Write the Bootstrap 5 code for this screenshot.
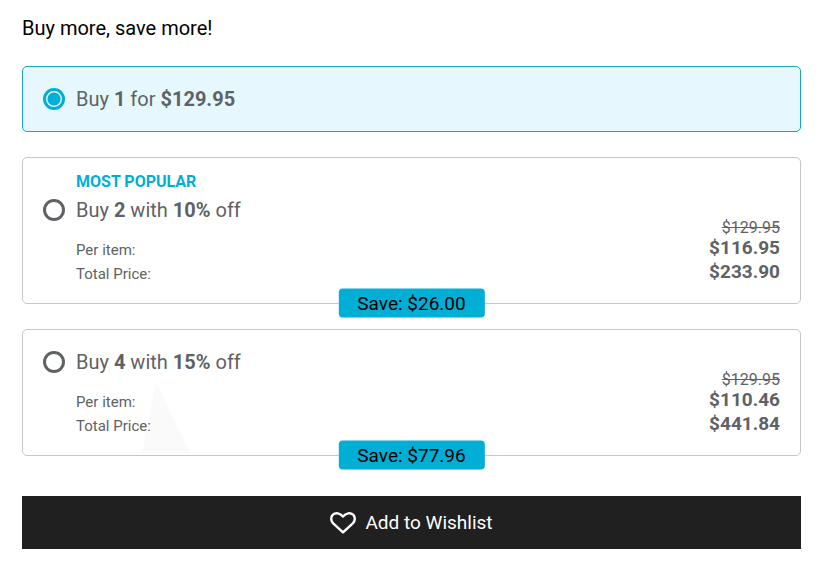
<!DOCTYPE html>
<html lang="en">
<head>
<meta charset="utf-8">
<meta name="viewport" content="width=device-width, initial-scale=1">
<title>Buy more, save more!</title>
<link href="https://cdn.jsdelivr.net/npm/bootstrap@5.3.0/dist/css/bootstrap.min.css" rel="stylesheet">
<script src="https://cdn.jsdelivr.net/npm/bootstrap@5.3.0/dist/js/bootstrap.bundle.min.js" defer></script>
<style>
  :root { --brand: #00aed6; --ink: #5f6265; }
  body { font-family: Roboto, "Open Sans", sans-serif; color: #000; background: #fff; }
  .offers { padding: 16px 18px 20px 22px; }
  .offers-title { font-size: 20px; line-height: 24px; font-weight: 400; margin-bottom: 26px; }
  .offer { color: var(--ink); border: 1px solid #c3c8ca; border-radius: 5px; padding: 21px 20px 17px; margin-bottom: 25px; }
  .offer-single { padding-bottom: 21px; }
  .offer-popular { padding-top: 12px; }
  .offer-selected { background: #e6f8fe; border-color: #14a9be; }
  .offer-choice { gap: 11px; font-size: 20px; line-height: 22px; }
  .offer-choice .form-check-input { width: 22px; height: 22px; border: 3px solid var(--ink); background-color: transparent; }
  .offer-choice .form-check-input:checked { border-color: var(--brand); background: #e6f8fe radial-gradient(circle, var(--brand) 6px, transparent 7px); }
  .offer-flag { color: var(--brand); font-size: 16px; line-height: 24px; margin-bottom: 5px; }
  .indent { padding-left: 33px; }
  .offer-prices { color: var(--ink); line-height: 24px; }
  .offer-prices th { font-size: 15px; font-weight: 400; }
  .offer-prices td { font-size: 19px; line-height: 20px; font-weight: 700; text-align: right; vertical-align: top; }
  .offer-prices .was { height: 17px; font-size: 16px; line-height: 14px; font-weight: 400; }
  .offer-save { background: var(--brand); color: #000; border-radius: 4px; font-size: 19px; line-height: 29px; padding: 0 19px; }
  .peak { left: 119px; bottom: 2px; width: 48px; height: 72px; }
  .wish { background: #202020; color: #fff; font-size: 19px; line-height: 25px; padding: 14px; gap: 9px; border: 0; margin-top: 40px; }
  .wish:hover { background: #333; color: #fff; }
</style>
</head>
<body>
<main class="offers container-fluid">
  <form>
    <h1 class="offers-title">Buy more, save more!</h1>

    <section class="offer offer-single offer-selected">
      <div class="offer-choice d-flex align-items-center">
        <input class="form-check-input m-0 flex-shrink-0" type="radio" name="offer" id="offer1" checked>
        <label for="offer1">Buy <b>1</b> for <b>$129.95</b></label>
      </div>
    </section>

    <section class="offer offer-popular position-relative">
      <p class="offer-flag indent fw-bold">MOST POPULAR</p>
      <div class="offer-choice d-flex align-items-center">
        <input class="form-check-input m-0 flex-shrink-0" type="radio" name="offer" id="offer2">
        <label for="offer2">Buy <b>2</b> with <b>10%</b> off</label>
      </div>
      <div class="indent">
        <table class="offer-prices w-100">
          <tbody>
            <tr><td class="was p-0" colspan="2"><s>$129.95</s></td></tr>
            <tr><th class="p-0" scope="row">Per item:</th><td class="p-0">$116.95</td></tr>
            <tr><th class="p-0" scope="row">Total Price:</th><td class="p-0">$233.90</td></tr>
          </tbody>
        </table>
      </div>
      <div class="offer-save position-absolute top-100 start-50 translate-middle text-nowrap">Save: $26.00</div>
    </section>

    <section class="offer position-relative mb-0">
      <svg class="peak position-absolute" viewBox="0 0 48 72" aria-hidden="true"><path d="M14 0 48 72H0Z" fill="#fafafa"/></svg>
      <div class="offer-choice d-flex align-items-center position-relative">
        <input class="form-check-input m-0 flex-shrink-0" type="radio" name="offer" id="offer4">
        <label for="offer4">Buy <b>4</b> with <b>15%</b> off</label>
      </div>
      <div class="indent position-relative">
        <table class="offer-prices w-100">
          <tbody>
            <tr><td class="was p-0" colspan="2"><s>$129.95</s></td></tr>
            <tr><th class="p-0" scope="row">Per item:</th><td class="p-0">$110.46</td></tr>
            <tr><th class="p-0" scope="row">Total Price:</th><td class="p-0">$441.84</td></tr>
          </tbody>
        </table>
      </div>
      <div class="offer-save position-absolute top-100 start-50 translate-middle text-nowrap">Save: $77.96</div>
    </section>

    <button type="button" class="wish btn rounded-0 w-100 d-flex align-items-center justify-content-center">
      <svg width="26" height="22" viewBox="0 0 26 22" fill="none" stroke="#fff" stroke-width="2.4" stroke-linejoin="round" aria-hidden="true"><path d="M13 20.400 3.200 11.400C.6 8.800.6 4.900 2.900 2.700 5.600.3 10 .9 13 4.600 16 .9 20.400.3 23.100 2.700 25.400 4.900 25.400 8.800 22.800 11.400Z"/></svg>
      <span>Add to Wishlist</span>
    </button>
  </form>
</main>
</body>
</html>
